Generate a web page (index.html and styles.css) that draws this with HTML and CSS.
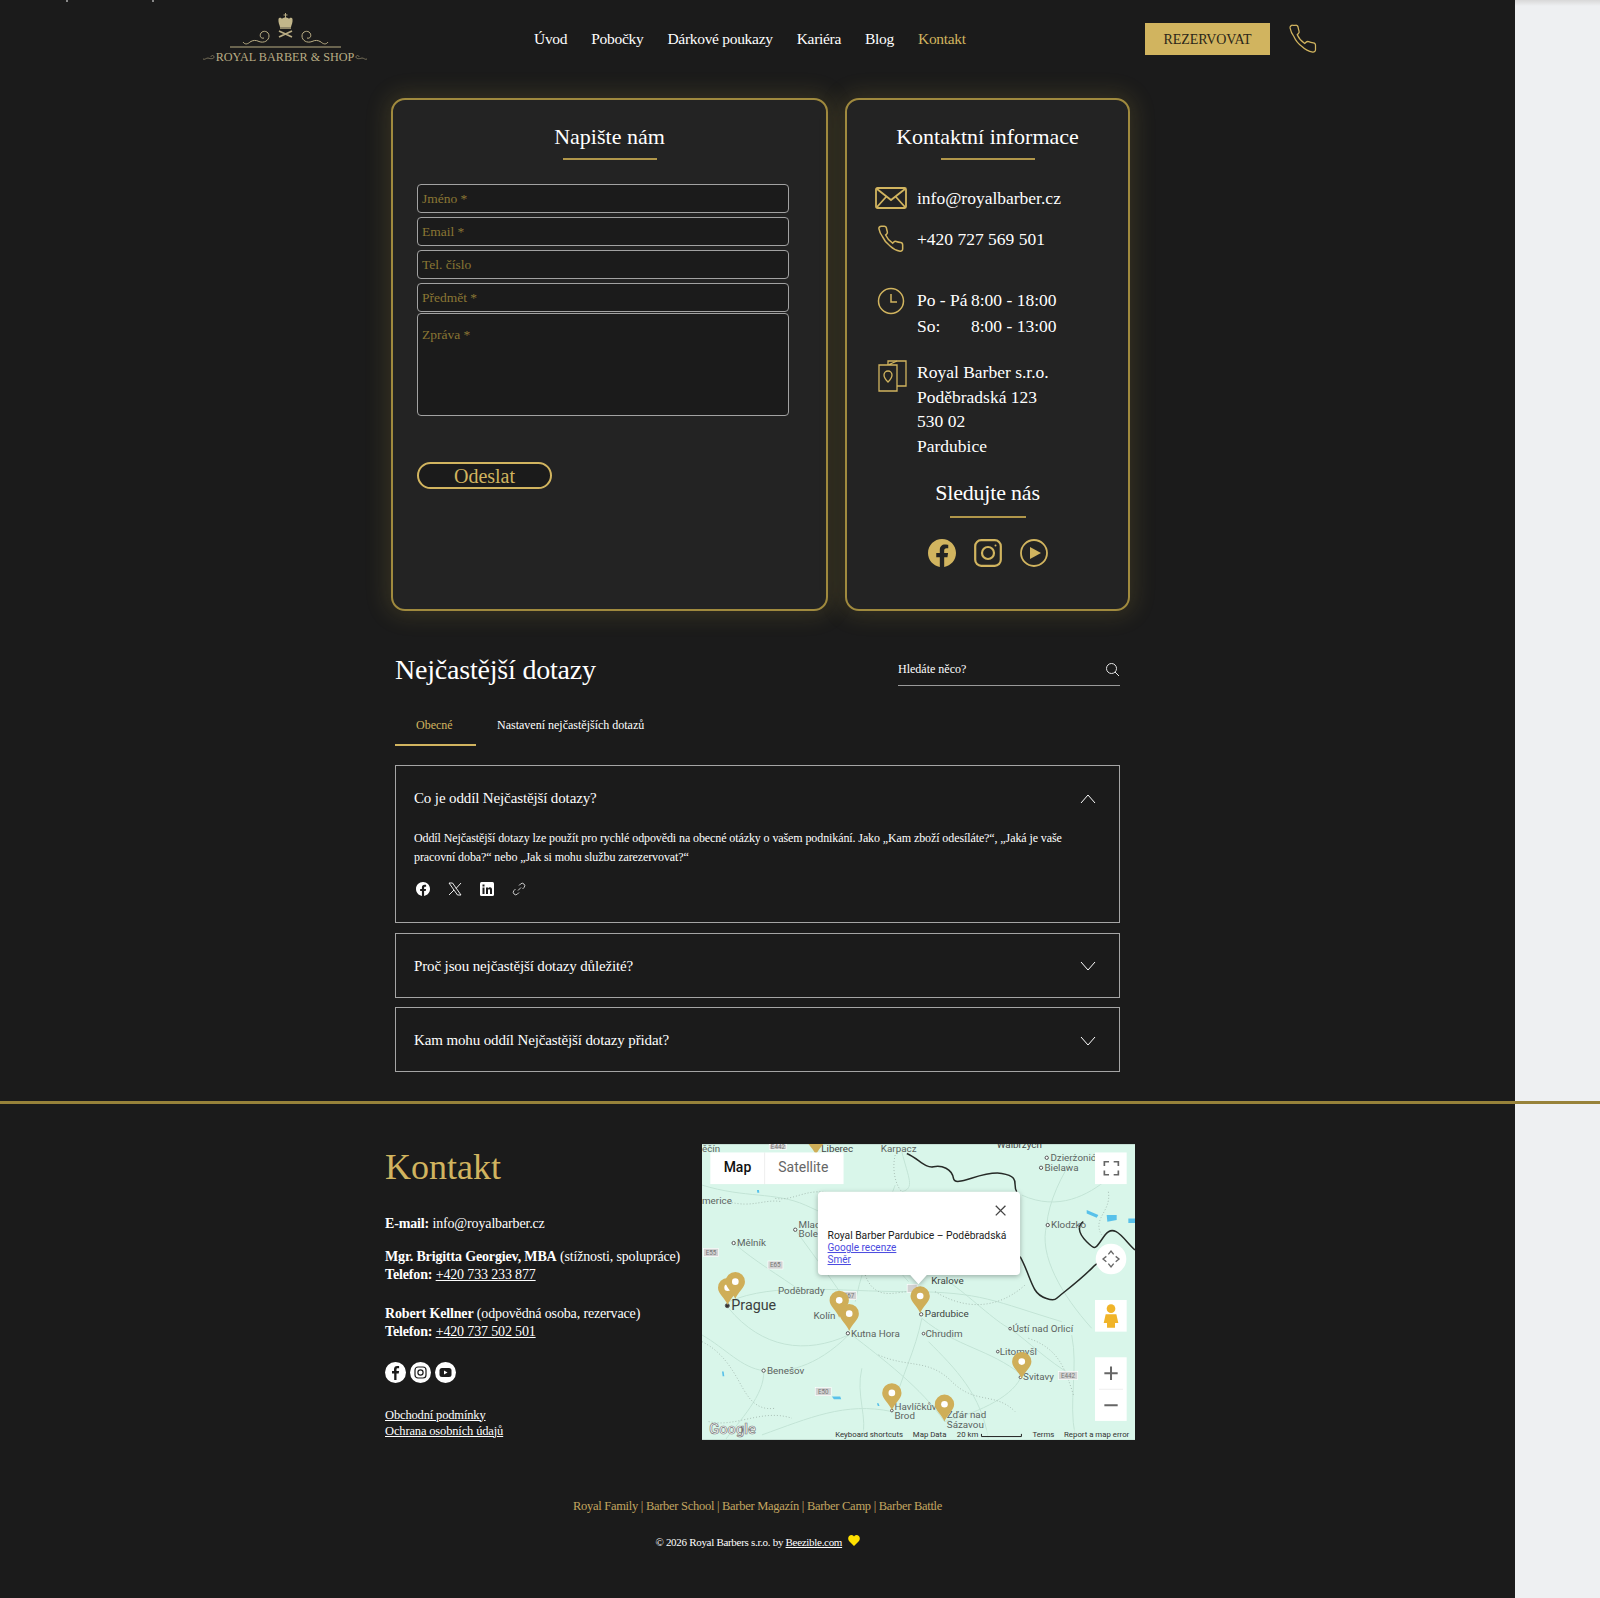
FILE: index.html
```html
<!DOCTYPE html>
<html lang="cs">
<head>
<meta charset="UTF-8">
<title>Kontakt - Royal Barber</title>
<link rel="stylesheet" href="styles.css">
</head>
<body>
<i class="top-mark mark-a"></i><i class="top-mark mark-b"></i>
<div class="page">
  <header class="site-header">
    <a class="logo" href="#">
      <svg class="logo-art" width="111" height="36" viewBox="0 0 111 36" fill="none" stroke="#b9ad84" stroke-width="1">
        <path d="M55.500 0v5M53.500 2h4"/>
        <path d="M48.500 6c1-2 3-1 3.500 0 .500-2 6.500-2 7 0 .500-1 2.500-2 3.500 0 .500 3-1 6-1.500 8h-11c-.500-2-2-5-1.500-8z" fill="#c2b68a" stroke="none"/>
        <path d="M50 15h11" stroke-width="1.500"/>
        <path d="M49 24l13-6M62 24l-13-6" stroke-width="1.800"/>
        <path d="M13 29c2 3 5 2 7 0 3-2 6-2 9-.500 5 2 10-1 10-5.500 0-5-6-6-8-3-2 3 0 6 3 5"/>
        <path d="M98 29c-2 3-5 2-7 0-3-2-6-2-9-.500-5 2-10-1-10-5.500 0-5 6-6 8-3 2 3 0 6-3 5"/>
        <path d="M0 34h111" stroke-width="1.200"/>
      </svg>
      <span class="logo-text">
        <svg width="12" height="6" viewBox="0 0 12 6" fill="none" stroke="#8d8468" stroke-width=".8"><path d="M0 4c2 1 3-1 5-1 3 1 6 1 6-1 0-2-3-2-3 0"/></svg>
        ROYAL BARBER &amp; SHOP
        <svg width="12" height="6" viewBox="0 0 12 6" fill="none" stroke="#8d8468" stroke-width=".8"><path d="M12 4c-2 1-3-1-5-1-3 1-6 1-6-1 0-2 3-2 3 0"/></svg>
      </span>
    </a>
    <nav class="main-nav">
      <a href="#">Úvod</a>
      <a href="#">Pobočky</a>
      <a href="#">Dárkové poukazy</a>
      <a href="#">Kariéra</a>
      <a href="#">Blog</a>
      <a href="#" class="active">Kontakt</a>
    </nav>
    <a class="book-btn" href="#">REZERVOVAT</a>
    <svg class="header-phone" width="30" height="30" viewBox="0 0 24 24" fill="none" stroke="#d1b45f" stroke-width="1"><path d="M22 18.500v2a2 2 0 0 1-2.180 2 17 17 0 0 1-8.630-4.500 19.500 19.500 0 0 1-6.500-8 17 17 0 0 1-3.070-6.900A2 2 0 0 1 3.700 1h2.400a2 2 0 0 1 2 1.720c.130.960 .360 1.900.700 2.810a2 2 0 0 1-.450 2.110L7.400 8.600a16 16 0 0 0 6 7l1-1a2 2 0 0 1 2.100-.450c.900.340 3 .800 3.800.900a2 2 0 0 1 1.700 2z"/></svg>
  </header>

  <section class="cards">
    <div class="card card-form">
      <h2 class="card-title">Napište nám</h2>
      <form class="contact-form">
        <input type="text" placeholder="Jméno *">
        <input type="text" placeholder="Email *">
        <input type="text" placeholder="Tel. číslo">
        <input type="text" placeholder="Předmět *">
        <textarea placeholder="Zpráva *"></textarea>
        <button type="button" class="send-btn">Odeslat</button>
      </form>
    </div>
    <div class="card card-info">
      <h2 class="card-title">Kontaktní informace</h2>
      <div class="info-row row-mail">
        <svg width="32" height="22" viewBox="0 0 32 22" fill="none" stroke="#d1b45f" stroke-width="1.800"><rect x="1" y="1" width="30" height="20" rx="1.500"/><path d="M2 2l14 11L30 2M2 20l9-10M30 20l-9-10"/></svg>
        <span>info@royalbarber.cz</span>
      </div>
      <div class="info-row row-phone">
        <svg width="32" height="28" viewBox="0 0 24 24" fill="none" stroke="#d1b45f" stroke-width="1.300"><path d="M22 18.500v2a2 2 0 0 1-2.180 2 17 17 0 0 1-8.630-4.500 19.500 19.500 0 0 1-6.500-8 17 17 0 0 1-3.070-6.900A2 2 0 0 1 3.700 1h2.400a2 2 0 0 1 2 1.720c.130.960 .360 1.900.700 2.810a2 2 0 0 1-.450 2.110L7.400 8.600a16 16 0 0 0 6 7l1-1a2 2 0 0 1 2.100-.450c.900.340 3 .800 3.800.900a2 2 0 0 1 1.700 2z"/></svg>
        <span>+420 727 569 501</span>
      </div>
      <div class="info-row row-hours">
        <svg width="32" height="28" viewBox="0 0 28 28" fill="none" stroke="#d1b45f" stroke-width="1.500"><circle cx="14" cy="14" r="12.500"/><path d="M14 7v8h6"/></svg>
        <div><div class="hours-line"><span class="day">Po - Pá</span>8:00 - 18:00</div><div class="hours-line"><span class="day">So:</span>8:00 - 13:00</div></div>
      </div>
      <div class="info-row row-addr">
        <svg width="32" height="34" viewBox="-3 0 32 34" fill="none" stroke="#d1b45f" stroke-width="1.300"><path d="M10 5V1h18v25h-9"/><path d="M1 5h18v26H1zM10 5l9-4"/><path d="M10 22s-4-4-4-7a4 4 0 0 1 8 0c0 3-4 7-4 7z"/></svg>
        <div class="addr">Royal Barber s.r.o.<br>Poděbradská 123<br>530 02<br>Pardubice</div>
      </div>
      <h2 class="card-title follow-title">Sledujte nás</h2>
      <div class="social">
        <svg width="28" height="28" viewBox="0 0 24 24" fill="#d1b45f"><path d="M24 12.073c0-6.627-5.373-12-12-12s-12 5.373-12 12c0 5.990 4.388 10.954 10.125 11.854v-8.385H7.078v-3.470h3.047V9.430c0-3.007 1.792-4.669 4.533-4.669 1.312 0 2.686.235 2.686.235v2.953H15.830c-1.491 0-1.956.925-1.956 1.874v2.250h3.328l-.532 3.470h-2.796v8.385C19.612 23.027 24 18.062 24 12.073z"/></svg>
        <svg width="28" height="28" viewBox="0 0 28 28" fill="none" stroke="#d1b45f" stroke-width="2.200"><rect x="1.200" y="1.200" width="25.600" height="25.600" rx="6"/><circle cx="14" cy="14" r="6"/><circle cx="21.500" cy="6.500" r="1" fill="#d1b45f" stroke="none"/></svg>
        <svg width="28" height="28" viewBox="0 0 28 28" fill="none" stroke="#d1b45f" stroke-width="1.800"><circle cx="14" cy="14" r="13"/><path d="M10 8l11 6-11 6z" fill="#d1b45f" stroke="none"/></svg>
      </div>
    </div>
  </section>

  <section class="faq">
    <div class="faq-head">
      <h2>Nejčastější dotazy</h2>
      <div class="faq-search">
        <span>Hledáte něco?</span>
        <svg width="15" height="15" viewBox="0 0 15 15" fill="none" stroke="#e6e6e6" stroke-width="1"><circle cx="6.500" cy="6.500" r="5"/><path d="M10 10l4 4"/></svg>
      </div>
    </div>
    <div class="faq-tabs">
      <a class="tab active" href="#">Obecné</a>
      <a class="tab" href="#">Nastavení nejčastějších dotazů</a>
    </div>
    <div class="faq-item open">
      <div class="faq-q">
        <span>Co je oddíl Nejčastější dotazy?</span>
        <svg width="16" height="10" viewBox="0 0 16 10" fill="none" stroke="#fff" stroke-width="1"><path d="M1 9l7-8 7 8"/></svg>
      </div>
      <p class="faq-a">Oddíl Nejčastější dotazy lze použít pro rychlé odpovědi na obecné otázky o vašem podnikání. Jako „Kam zboží odesíláte?“, „Jaká je vaše pracovní doba?“ nebo „Jak si mohu službu zarezervovat?“</p>
      <div class="share">
        <svg width="14" height="14" viewBox="0 0 24 24" fill="#fff"><path d="M24 12.073c0-6.627-5.373-12-12-12s-12 5.373-12 12c0 5.990 4.388 10.954 10.125 11.854v-8.385H7.078v-3.470h3.047V9.430c0-3.007 1.792-4.669 4.533-4.669 1.312 0 2.686.235 2.686.235v2.953H15.830c-1.491 0-1.956.925-1.956 1.874v2.250h3.328l-.532 3.470h-2.796v8.385C19.612 23.027 24 18.062 24 12.073z"/></svg>
        <svg width="14" height="14" viewBox="0 0 14 14" fill="none" stroke="#fff" stroke-width=".9"><path d="M1 1l8.500 12H13L4.500 1zM13 1L8 6.500M6 8l-5 5"/></svg>
        <svg width="14" height="14" viewBox="0 0 14 14"><rect width="14" height="14" rx="1.500" fill="#fff"/><path d="M2.500 5.500h2V12h-2zM2.500 2.500h2v2h-2zM6 5.500h2v1c.500-.800 1.200-1.200 2-1.200 1.500 0 2 1 2 2.500V12h-2V8.500c0-.800-.300-1.300-1-1.300S8 7.700 8 8.500V12H6z" fill="#1b1b1b"/></svg>
        <svg width="14" height="14" viewBox="0 0 14 14" fill="none" stroke="#ddd" stroke-width=".9"><path d="M6 8.500l3-3M7 3.500l1.500-1.500a2.400 2.400 0 0 1 3.500 3.500L10.500 7M7 10.500L5.500 12A2.400 2.400 0 0 1 2 8.500L3.500 7"/></svg>
      </div>
    </div>
    <div class="faq-item">
      <div class="faq-q">
        <span>Proč jsou nejčastější dotazy důležité?</span>
        <svg width="16" height="10" viewBox="0 0 16 10" fill="none" stroke="#fff" stroke-width="1"><path d="M1 1l7 8 7-8"/></svg>
      </div>
    </div>
    <div class="faq-item">
      <div class="faq-q">
        <span>Kam mohu oddíl Nejčastější dotazy přidat?</span>
        <svg width="16" height="10" viewBox="0 0 16 10" fill="none" stroke="#fff" stroke-width="1"><path d="M1 1l7 8 7-8"/></svg>
      </div>
    </div>
  </section>
</div>

<hr class="gold-line">

<div class="page">
  <footer class="site-footer">
    <div class="footer-main">
      <div class="footer-contact">
        <h2>Kontakt</h2>
        <p class="line-mail"><b>E-mail:</b> info@royalbarber.cz</p>
        <p class="person"><b>Mgr. Brigitta Georgiev, MBA</b> (stížnosti, spolupráce)<br><b>Telefon:</b> <a href="#">+420 733 233 877</a></p>
        <p class="person"><b>Robert Kellner</b> (odpovědná osoba, rezervace)<br><b>Telefon:</b> <a href="#">+420 737 502 501</a></p>
        <div class="footer-social">
          <svg width="21" height="21" viewBox="0 0 21 21"><circle cx="10.500" cy="10.500" r="10.500" fill="#fff"/><path d="M11.500 18v-6.500h2.200l.400-2.500h-2.600V7.500c0-.800.300-1.200 1.300-1.200h1.300V4.100c-.500-.100-1.200-.200-1.900-.200-2 0-3.200 1.200-3.200 3.300V9H7v2.500h2.200V18z" fill="#1b1b1b"/></svg>
          <svg width="21" height="21" viewBox="0 0 21 21" fill="none"><circle cx="10.500" cy="10.500" r="10.500" fill="#fff"/><rect x="5" y="5" width="11" height="11" rx="3" stroke="#1b1b1b" stroke-width="1.200"/><circle cx="10.500" cy="10.500" r="2.600" stroke="#1b1b1b" stroke-width="1.200"/></svg>
          <svg width="21" height="21" viewBox="0 0 21 21"><circle cx="10.500" cy="10.500" r="10.500" fill="#fff"/><rect x="4.500" y="6" width="12" height="9" rx="2.500" fill="#1b1b1b"/><path d="M9 8.500l3.500 2-3.500 2z" fill="#fff"/></svg>
        </div>
        <div class="legal"><a href="#">Obchodní podmínky</a><a href="#">Ochrana osobních údajů</a></div>
      </div>
      <div class="map">
        <svg width="433" height="296" viewBox="20 27 1300 888">
          <rect x="20" y="27" width="1300" height="888" fill="#d9f6ea"/>
          <g fill="none" stroke="#c3e4d6" stroke-width="3">
            <path d="M20 150C150 190 240 170 330 210S520 300 640 440M100 500C240 440 420 470 640 470S900 500 1100 560M100 520C200 640 330 660 460 600M680 550C660 650 620 720 590 830M680 550C790 640 880 640 980 720M470 600C560 670 680 760 748 860M980 720C960 780 860 830 748 860M590 830C450 800 340 850 200 900M1130 600C1150 700 1120 800 1140 900M600 150C560 260 510 360 480 500M980 180C1090 230 1180 180 1240 130"/>
            <path d="M20 600C90 640 140 700 205 707S360 700 460 600M205 707C210 780 130 860 90 915M300 284C340 340 400 420 440 480M115 324C180 380 250 420 320 470M760 440C820 480 900 560 945 581M1055 270C1030 360 1100 480 1190 580M945 581C1000 620 1060 680 1130 720M700 620C780 700 860 780 880 915M500 700C480 780 520 850 500 915M1140 60C1100 120 1060 200 1055 270M620 50C640 130 660 160 620 170"/>
          </g>
          <g fill="none" stroke="#9fb5ab" stroke-width="2.500" stroke-dasharray="3 6">
            <path d="M240 190C300 200 340 150 420 180M510 420C540 500 600 470 640 470M550 660C640 700 700 670 770 740S900 770 960 830M720 470C800 520 900 530 990 450M1000 610C1090 640 1110 700 1135 780M40 860C120 880 200 820 290 850M1240 170C1250 230 1190 250 1220 300M100 200C170 220 210 190 260 200M600 60C590 100 600 150 620 170M20 620C60 640 90 670 120 720S170 830 240 820"/>
          </g>
          <path d="M635 55C670 70 690 100 715 95S770 100 775 130 860 105 920 115 950 150 965 170M975 365C995 400 1005 440 1020 465S1075 500 1085 490 1150 440 1190 400 1215 395 1240 380M1165 260C1150 270 1145 290 1175 320S1200 340 1230 300 1290 320 1320 345" fill="none" stroke="#262a27" stroke-width="4.500"/>
          <g fill="#58c1ea">
            <path d="M1175 225l35 15-5 8-30-13zM1235 240h30v15l-28 5zM1300 250h20v14h-20z"/>
            <path d="M185 165l6 0 1 8-6 0zM410 785l25 0 3 8-22 0zM545 805l5 0 3 8-5 0zM80 710l5 0 2 14-5 0z"/>
          </g>
          <g class="map-shield">
            <rect x="25" y="340" width="45" height="24"/><rect x="218" y="378" width="45" height="24"/><rect x="438" y="470" width="46" height="24"/><rect x="360" y="758" width="48" height="24"/><rect x="1090" y="710" width="58" height="24"/><rect x="222" y="27" width="52" height="16"/><rect x="636" y="448" width="30" height="24"/>
          </g>
          <g class="shield-text">
            <text x="47" y="359">E55</text><text x="240" y="397">E65</text><text x="461" y="489">E67</text><text x="384" y="777">E50</text><text x="1119" y="729">E442</text><text x="248" y="42">E442</text>
          </g>
          <g class="map-label">
            <text x="20" y="52">ěčín</text><text x="378" y="52" class="lg">Liberec</text><text x="557" y="52">Karpacz</text><text x="905" y="38" class="lg">Walbrzych</text>
            <text x="1066" y="77">Dzierżoniów</text><text x="1048" y="107">Bielawa</text><text x="20" y="208">merice</text>
            <text x="1068" y="279">Klodzko</text><text x="310" y="279">Mlad</text><text x="310" y="307">Bole</text>
            <text x="125" y="334">Mělník</text><text x="248" y="476">Poděbrady</text><text x="355" y="552">Kolín</text>
            <text x="467" y="605">Kutna Hora</text><text x="689" y="547" class="dark">Pardubice</text><text x="691" y="605">Chrudim</text>
            <text x="708" y="446" class="dark">Kralove</text><text x="952" y="590">Ústí nad Orlicí</text><text x="914" y="659">Litomyšl</text>
            <text x="984" y="736">Svitavy</text><text x="215" y="716">Benešov</text><text x="598" y="824">Havlíčkův</text><text x="598" y="852">Brod</text>
            <text x="755" y="849">Žďár nad</text><text x="755" y="879">Sázavou</text>
            <text x="108" y="526" class="city">Prague</text>
          </g>
          <g fill="#fff" stroke="#555" stroke-width="3">
            <circle cx="300" cy="284" r="5"/><circle cx="115" cy="324" r="5"/><circle cx="205" cy="707" r="5"/><circle cx="458" cy="595" r="5"/><circle cx="678" cy="538" r="5"/><circle cx="685" cy="596" r="4"/><circle cx="908" cy="650" r="4"/><circle cx="945" cy="581" r="4"/><circle cx="976" cy="727" r="4"/><circle cx="590" cy="827" r="4"/><circle cx="1058" cy="270" r="5"/><circle cx="1055" cy="68" r="5"/><circle cx="1038" cy="98" r="5"/>
            <circle cx="96" cy="512" r="6" fill="#333"/>
          </g>
          <defs>
            <g id="pin"><path d="M0 0C-8-22-29-33-29-52a29 29 0 0 1 58 0C29-33 8-22 0 0z" fill="#cfae58"/><circle cy="-52" r="10" fill="#fff"/></g>
          </defs>
          <use href="#pin" x="97" y="510"/><use href="#pin" x="120" y="492"/><use href="#pin" x="362" y="60"/>
          <use href="#pin" x="432" y="548"/><use href="#pin" x="462" y="588"/><use href="#pin" x="675" y="535"/>
          <use href="#pin" x="980" y="732"/><use href="#pin" x="590" y="826"/><use href="#pin" x="748" y="860"/>

          <g class="map-popup">
            <path d="M380 170h583a12 12 0 0 1 12 12v226a12 12 0 0 1-12 12H695l-25 28-25-28H380a12 12 0 0 1-12-12V182a12 12 0 0 1 12-12z" fill="#fff"/>
          </g>
          <path d="M902 212l29 29M931 212l-29 29" stroke="#444" stroke-width="4"/>
          <text x="397" y="312" class="popup-title">Royal Barber Pardubice – Poděbradská</text>
          <text x="397" y="348" class="popup-link">Google recenze</text>
          <text x="397" y="384" class="popup-link">Směr</text>

          <rect x="45" y="52" width="400" height="95" fill="#fff"/>
          <path d="M208 52v95" stroke="#e6e6e6" stroke-width="2"/>
          <text x="85" y="112" class="ctl ctl-on">Map</text>
          <text x="249" y="112" class="ctl">Satellite</text>

          <rect x="1200" y="52" width="95" height="95" fill="#fff"/>
          <path d="M1228 93V80h14M1256 80h14v13M1270 106v13h-14M1242 119h-14v-13" fill="none" stroke="#666" stroke-width="5"/>
          <circle cx="1248" cy="372" r="46" fill="#fff"/>
          <path d="M1240 358l8-10 8 10M1240 386l8 10 8-10M1234 364l-10 8 10 8M1262 364l10 8-10 8" fill="none" stroke="#666" stroke-width="4"/>
          <rect x="1200" y="495" width="95" height="95" fill="#fff"/>
          <circle cx="1248" cy="521" r="13" fill="#f0b429"/>
          <path d="M1232 538h32l6 26h-10v14h-24v-14h-10z" fill="#f0b429"/>
          <rect x="1200" y="667" width="95" height="191" fill="#fff"/>
          <path d="M1212 763h72" stroke="#e6e6e6" stroke-width="2"/>
          <path d="M1248 695v40M1228 715h40M1228 811h40" stroke="#666" stroke-width="6"/>

          <text x="42" y="897" class="g-logo">Google</text>
          <rect x="415" y="884" width="905" height="31" fill="#d9f6ea" opacity=".6"/>
          <g class="map-foot">
            <text x="420" y="906">Keyboard shortcuts</text><text x="653" y="906">Map Data</text><text x="785" y="906">20 km</text>
            <text x="1012" y="906">Terms</text><text x="1107" y="906">Report a map error</text>
          </g>
          <path d="M859 897v8h120v-8" fill="none" stroke="#222" stroke-width="3"/>
        </svg>
      </div>
    </div>
    <div class="family-links">Royal Family | Barber School | Barber Magazín | Barber Camp | Barber Battle</div>
    <div class="copyright">© 2026 Royal Barbers s.r.o. by <a href="#">Beezible.com</a>
      <svg width="12" height="11" viewBox="0 0 12 11"><path d="M6 11L1 6C-1 3 1 0 3.500 0 5 0 5.500 1 6 1.500 6.500 1 7 0 8.500 0 11 0 13 3 11 6z" fill="#ffe000"/></svg>
    </div>
  </footer>
</div>
</body>
</html>
```

FILE: styles.css
```css
* {
  box-sizing: border-box;
}

body {
  margin: 0;
  width: 1600px;
  overflow-x: hidden;
  background: linear-gradient(#d8d8d8 0, #eef0f2 6px);
  font-family: "Liberation Serif", serif;
  color: #fff;
}

a {
  color: inherit;
}

.page {
  width: 1515px;
  background: #1b1b1b;
}

/* bits of a cut off line at the very top edge */
.top-mark {
  position: absolute;
  top: 0;
  width: 2px;
  height: 2px;
  background: #888;
}

.mark-a {
  left: 66px;
}

.mark-b {
  left: 152px;
}

/* header */
.site-header {
  display: flex;
  align-items: center;
  height: 78px;
  padding: 0 197px 0 200px;
}

.logo {
  display: flex;
  flex-direction: column;
  align-items: center;
  width: 170px;
  text-decoration: none;
}

.logo-art {
  display: block;
}

.logo-text {
  display: flex;
  align-items: center;
  gap: 1px;
  margin-top: 1px;
  font-size: 12.200px;
  color: #b9ad84;
  white-space: nowrap;
}

.main-nav {
  display: flex;
  gap: 24px;
  margin-left: 164px;
  font-size: 15.500px;
  letter-spacing: -0.300px;
}

.main-nav a {
  text-decoration: none;
}

.main-nav .active {
  color: #d1b45f;
}

.book-btn {
  display: flex;
  align-items: center;
  justify-content: center;
  width: 125px;
  height: 32px;
  margin-left: auto;
  padding-top: 2px;
  background: #d1b45f;
  color: #2b2618;
  font-size: 14px;
  letter-spacing: -0.100px;
  text-decoration: none;
}

.header-phone {
  margin-left: 18px;
}

/* cards */
.cards {
  display: flex;
  gap: 17px;
  padding: 20px 0 0 391px;
  height: 532px;
}

.card {
  height: 513px;
  padding-top: 23px;
  background: #232323;
  border: 2.500px solid #a08a3e;
  border-radius: 14px;
  box-shadow: 0 0 22px 5px rgba(190, 165, 70, 0.16);
}

.card-form {
  width: 437px;
  padding-left: 24px;
}

.card-info {
  width: 285px;
  padding-left: 28px;
}

.card-title {
  position: relative;
  margin: 0;
  height: 37px;
  font-size: 22px;
  font-weight: 400;
  line-height: 28px;
  text-align: center;
}

.card-title::after {
  content: "";
  position: absolute;
  left: 50%;
  bottom: 0;
  width: 94px;
  height: 2px;
  margin-left: -47px;
  background: #b0964a;
}

.card-form .card-title {
  margin-left: -24px;
}

.card-info .card-title {
  margin-left: -28px;
}

.contact-form {
  display: flex;
  flex-direction: column;
  align-items: flex-start;
  gap: 4px;
  margin-top: 24px;
}

.contact-form input,
.contact-form textarea {
  display: block;
  width: 372px;
  height: 29px;
  padding: 0 4px;
  background: #1b1b1b;
  border: 1px solid #a2a2a2;
  border-radius: 4px;
  color: #fff;
  font-family: "Liberation Serif", serif;
  font-size: 13.500px;
}

.contact-form textarea {
  height: 103px;
  margin-top: -3px;
  padding-top: 13px;
  resize: none;
}

.contact-form ::placeholder {
  color: #8a7634;
  opacity: 1;
}

.send-btn {
  width: 135px;
  height: 27px;
  margin-top: 42px;
  padding: 0;
  background: #1b1b1b;
  border: 2px solid #d1b45f;
  border-radius: 14px;
  color: #d1b45f;
  font-family: "Liberation Serif", serif;
  font-size: 20px;
  line-height: 22px;
}

.info-row {
  display: flex;
  gap: 10px;
  font-size: 17.500px;
  white-space: nowrap;
}

.info-row > svg {
  flex: none;
}

.row-mail {
  align-items: center;
  height: 28px;
  margin-top: 24px;
}

.row-phone {
  align-items: center;
  height: 28px;
  margin-top: 13px;
}

.row-hours {
  margin-top: 34px;
}

.hours-line {
  height: 26px;
  line-height: 26px;
}

.day {
  display: inline-block;
  width: 54px;
}

.row-addr {
  margin-top: 21px;
}

.addr {
  line-height: 24.500px;
}

.follow-title {
  margin-top: 21px;
  height: 39px;
  letter-spacing: -0.200px;
}

.follow-title::after {
  width: 76px;
  margin-left: -38px;
}

.social {
  display: flex;
  justify-content: center;
  gap: 18px;
  margin: 21px 0 0 -28px;
}

/* faq */
.faq {
  padding: 0 0 19px 395px;
  width: 1120px;
}

.faq-head {
  display: flex;
  justify-content: space-between;
  height: 78px;
  padding-top: 42px;
}

.faq-head h2 {
  margin: 0;
  font-size: 28px;
  font-weight: 400;
  letter-spacing: -0.200px;
  line-height: 36px;
  white-space: nowrap;
}

.faq-search {
  display: flex;
  justify-content: space-between;
  align-items: center;
  width: 222px;
  height: 34px;
  padding-top: 2px;
  border-bottom: 1px solid #9a9a9a;
  font-size: 12px;
}

.faq-tabs {
  display: flex;
  height: 47px;
  margin-top: 11px;
  font-size: 12px;
}

.tab {
  display: block;
  padding: 19px 21px 0;
  text-decoration: none;
}

.tab.active {
  width: 81px;
  color: #d1b45f;
  border-bottom: 2.500px solid #d1b45f;
}

.faq-item {
  margin-bottom: 9.500px;
  padding: 0 18px;
  border: 1px solid #a5a5a5;
}

.faq-tabs + .faq-item {
  margin-top: 19px;
}

.faq-q {
  display: flex;
  justify-content: space-between;
  align-items: center;
  height: 63px;
  padding: 2px 5px 0 0;
  font-size: 15px;
  letter-spacing: -0.130px;
}

.faq-a {
  margin: 0;
  padding-right: 5px;
  font-size: 12px;
  letter-spacing: -0.100px;
  line-height: 19px;
}

.share {
  display: flex;
  gap: 18px;
  height: 55px;
  padding: 15px 0 0 2px;
}

/* footer */
.gold-line {
  width: 1600px;
  height: 3px;
  margin: 0;
  border: 0;
  background: #97823a;
}

.site-footer {
  height: 494px;
  padding-top: 40px;
}

.footer-main {
  display: flex;
  padding-left: 385px;
}

.footer-contact {
  width: 317px;
  font-size: 14px;
  letter-spacing: -0.150px;
}

.footer-contact h2 {
  margin: 0;
  height: 71px;
  color: #d1b45f;
  font-size: 36px;
  font-weight: 400;
  letter-spacing: 0;
  line-height: 46px;
}

.footer-contact p {
  margin: 0;
}

.line-mail {
  line-height: 18px;
  margin-bottom: 15px !important;
}

.person {
  line-height: 18px;
  margin-bottom: 21px !important;
}

.footer-social {
  display: flex;
  gap: 4px;
  margin-top: 21px;
}

.legal {
  display: flex;
  flex-direction: column;
  margin-top: 24px;
  font-size: 12.500px;
  line-height: 16px;
}

.map {
  width: 433px;
  height: 296px;
}

.map svg {
  display: block;
  font-family: Roboto, sans-serif;
}

.map-shield rect {
  fill: #d2d2d2;
  stroke: #fff;
  stroke-width: 2;
}

.shield-text text {
  fill: #777;
  font-size: 19px;
  text-anchor: middle;
}

.map-label text {
  fill: #5c6461;
  font-size: 29.500px;
}

.map-label text.dark {
  fill: #3d4441;
}

.map-label text.lg {
  fill: #444;
}

.map-label text.city {
  fill: #3b3f3d;
  font-size: 43px;
}

.map-popup {
  filter: drop-shadow(0 4px 8px rgba(0, 0, 0, 0.3));
}

.popup-title {
  fill: #222;
  font-size: 31px;
}

.popup-link {
  fill: #4a4ae0;
  font-size: 30px;
  text-decoration: underline;
}

.ctl {
  fill: #666;
  font-size: 42px;
}

.ctl-on {
  fill: #111;
  font-weight: 500;
}

.g-logo {
  fill: #fff;
  stroke: #777;
  stroke-width: 2;
  font-size: 44px;
  font-weight: 500;
}

.map-foot text {
  fill: #333;
  font-size: 23.500px;
}

.family-links {
  margin-top: 58px;
  color: #c3a660;
  font-size: 12.500px;
  letter-spacing: -0.280px;
  line-height: 16px;
  text-align: center;
}

.copyright {
  margin-top: 20px;
  font-size: 11px;
  letter-spacing: -0.300px;
  line-height: 16px;
  text-align: center;
}

.copyright svg {
  margin-left: 3px;
}
```
